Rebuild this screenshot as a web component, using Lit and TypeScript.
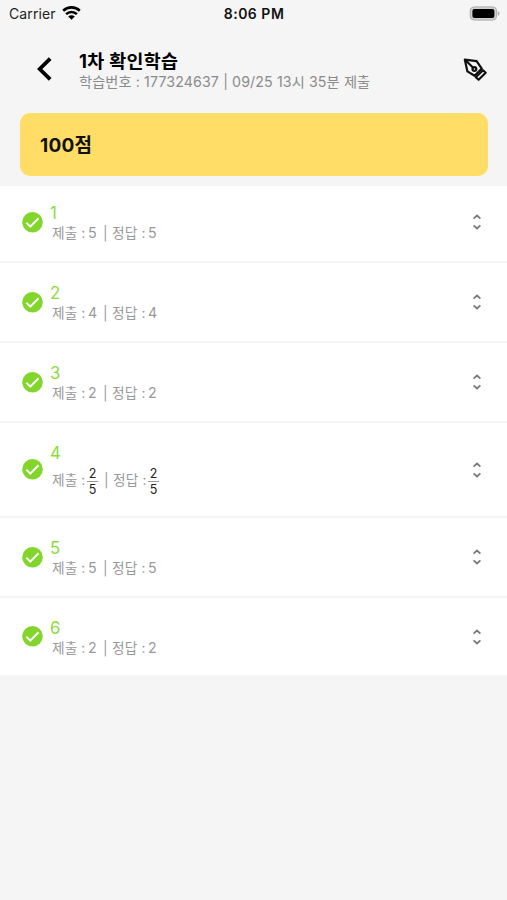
import { LitElement, html, css } from "lit";
import { customElement, property } from "lit/decorators.js";

interface Answer {
  no: number;
  value: string;
  denominator?: string;
}

const answers: Answer[] = [
  { no: 1, value: "5" },
  { no: 2, value: "4" },
  { no: 3, value: "2" },
  { no: 4, value: "2", denominator: "5" },
  { no: 5, value: "5" },
  { no: 6, value: "2" },
];

@customElement("status-bar")
export class StatusBar extends LitElement {
  static styles = css`
    :host {
      display: grid;
      grid-template-columns: 1fr auto 1fr;
      align-items: center;
      height: 28px;
      padding: 0 7px 0 9px;
      font-size: 14px;
      line-height: 28px;
      color: #222;
    }
    .left { display: flex; align-items: center; gap: 6px; letter-spacing: 0.12px; }
    .left svg { margin-top: -2px; }
    .time { font-weight: 600; color: #111; letter-spacing: 0.5px; margin-right: 1px; }
    .battery { justify-self: end; margin-top: -2px; }
    svg { display: block; }
  `;
  render() {
    return html`
      <div class="left">
        <span>Carrier</span>
        <svg width="19" height="14" viewBox="0 0 19 14" fill="none" stroke="#000" stroke-width="2.6">
          <path d="M1.2 4.7a12 12 0 0 1 16.6 0M4.1 8.1a7.8 7.8 0 0 1 10.8 0" />
          <path d="M9.5 13.8 6.2 10.5a4.7 4.7 0 0 1 6.6 0z" fill="#000" stroke="none" />
        </svg>
      </div>
      <span class="time">8:06 PM</span>
      <svg class="battery" width="31" height="15" viewBox="0 0 31 15">
        <rect x="1.2" y="0.9" width="26.4" height="13.2" rx="4" fill="#d0d0d0" stroke="#aaa" />
        <rect x="3.4" y="3" width="22" height="9" rx="2" fill="#000" />
        <path d="M28.8 5.2c2.2.7 2.2 3.9 0 4.6z" fill="#aaa" />
      </svg>
    `;
  }
}

@customElement("page-header")
export class PageHeader extends LitElement {
  static styles = css`
    :host {
      display: flex;
      align-items: center;
      height: 85px;
      padding: 0 19px 3px 36px;
      box-sizing: border-box;
    }
    svg { display: block; flex: none; }
    .text { flex: 1; margin-left: 26px; padding-top: 4px; white-space: nowrap; }
    .title { font-size: 18.4px; line-height: 22px; font-weight: 700; color: #000; letter-spacing: 0.35px; }
    .sub { font-size: 14.2px; line-height: 20px; color: #8b8b8b; letter-spacing: 0.12px; }
  `;
  render() {
    return html`
      <svg width="17" height="26" viewBox="0 0 17 26" fill="none" stroke="#000" stroke-width="3.8">
        <path d="M14.2 2.6 3.7 13l10.5 10.4" />
      </svg>
      <div class="text">
        <div class="title">1차 확인학습</div>
        <div class="sub">학습번호 : 177324637 | 09/25 13시 35분 제출</div>
      </div>
      <svg width="25" height="25" viewBox="0 0 25 25" fill="none" stroke="#111" stroke-width="2.2" stroke-linejoin="round" stroke-linecap="round">
        <path d="M1.8 2.6 13.6 4.2 18.8 11.6 11.6 18.8 4.4 14.4zM2 2.8l8.2 8" />
        <circle cx="11.4" cy="12" r="1.9" />
        <path d="M20 13.2l2.7 2.5-7.1 7.1-2.8-2.6z" />
      </svg>
    `;
  }
}

@customElement("answer-row")
export class AnswerRow extends LitElement {
  @property({ attribute: false }) answer!: Answer;

  static styles = css`
    :host {
      display: flex;
      align-items: center;
      padding: 18px 24px 18px 22px;
      background: #fff;
    }
    svg { display: block; flex: none; }
    .body { flex: 1; margin-left: 7px; padding-top: 2px; }
    .no { font-size: 16.7px; line-height: 20px; color: #8adc3a; }
    .line {
      display: flex;
      align-items: center;
      height: 20px;
      padding-left: 2px;
      font-size: 13.7px;
      line-height: 20px;
      color: #999;
      white-space: pre;
    }
    .line.tall { height: 35px; margin: -1px 0 1px; }
    .label { width: 35px; letter-spacing: 0.1px; }
    .value { width: 9px; margin-left: 1px; font-size: 14.2px; }
    .bar { margin: 0 4.5px 0 6px; }
    .fraction {
      display: flex;
      flex-direction: column;
      width: 11px;
      padding-top: 3px;
      text-align: center;
      font-size: 12.5px;
      line-height: 15px;
      color: #222;
    }
    .fraction span + span { border-top: 1px solid #999; }
  `;

  private value() {
    const { value, denominator } = this.answer;
    return denominator
      ? html`<span class="fraction"><span>${value}</span><span>${denominator}</span></span>`
      : html`<span class="value">${value}</span>`;
  }

  render() {
    return html`
      <svg width="21" height="21" viewBox="0 0 21 21">
        <circle cx="10.5" cy="10.3" r="10.3" fill="#82d52b" />
        <path d="M4.3 10.6l4 4L16.5 6.2" fill="none" stroke="#fff" stroke-width="2" />
      </svg>
      <div class="body">
        <div class="no">${this.answer.no}</div>
        <div class="line ${this.answer.denominator ? "tall" : ""}"><span class="label">제출 :</span>${this.value()}<span class="bar">|</span><span class="label">정답 :</span>${this.value()}</div>
      </div>
      <svg width="12" height="18" viewBox="0 0 12 18" fill="none" stroke="#777" stroke-width="1.7">
        <path d="M2.6 5.6 6 2.5l3.4 3.1M2.6 12.4 6 15.5l3.4-3.1" />
      </svg>
    `;
  }
}

@customElement("app-root")
export class AppRoot extends LitElement {
  static styles = css`
    :host {
      display: block;
      height: 900px;
      overflow: hidden;
      background: #f5f5f5;
      font-family: Inter, "Noto Sans CJK KR", sans-serif;
    }
    .score {
      margin: 0 19px 10px 20px;
      padding-left: 20px;
      height: 63px;
      border-radius: 10px;
      background: #ffdd66;
      font-size: 19px;
      line-height: 65px;
      font-weight: 700;
      color: #111;
      letter-spacing: 0.2px;
    }
    .list { display: flex; flex-direction: column; gap: 2px; }
    answer-row { height: 42px; }
    answer-row.first { height: 40px; padding-top: 16px; padding-bottom: 19px; }
    answer-row.tall { height: 57px; }
    answer-row.last { height: 41px; }
  `;
  render() {
    return html`
      <status-bar></status-bar>
      <page-header></page-header>
      <div class="score">100점</div>
      <div class="list">
        ${answers.map(
          (a, i) => html`<answer-row
            class=${a.denominator ? "tall" : i === 0 ? "first" : i === answers.length - 1 ? "last" : ""}
            .answer=${a}
          ></answer-row>`,
        )}
      </div>
    `;
  }
}
